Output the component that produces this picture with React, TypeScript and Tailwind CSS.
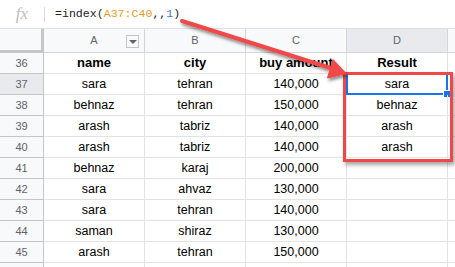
import React from 'react';

const rows: [number, string, string, string, string][] = [
  [37, 'sara', 'tehran', '140,000', 'sara'],
  [38, 'behnaz', 'tehran', '150,000', 'behnaz'],
  [39, 'arash', 'tabriz', '140,000', 'arash'],
  [40, 'arash', 'tabriz', '140,000', 'arash'],
  [41, 'behnaz', 'karaj', '200,000', ''],
  [42, 'sara', 'ahvaz', '130,000', ''],
  [43, 'sara', 'tehran', '140,000', ''],
  [44, 'saman', 'shiraz', '130,000', ''],
  [45, 'arash', 'tehran', '150,000', ''],
  [46, '', '', '', ''],
];

const font = { fontFamily: '"Liberation Sans", Arial, sans-serif' };

const Cell: React.FC<{ children?: React.ReactNode; bold?: boolean; selected?: boolean }> = ({ children, bold, selected }) => (
  <div
    className={`relative w-[101px] shrink-0 h-full flex items-center justify-center border-r border-b border-[#e2e3e3] text-black ${
      bold ? 'font-bold text-[13px]' : 'text-[12.5px]'
    }`}
  >
    {children}
    {selected && (
      <>
        <div className="absolute -left-[1px] -top-[1px] -right-[1px] -bottom-[1px] border-2 border-[#1a73e8]"></div>
        <div className="absolute -right-[4px] -bottom-[4px] w-[6px] h-[6px] bg-[#1a73e8] border border-white box-content"></div>
      </>
    )}
  </div>
);

const App: React.FC = () => {
  return (
    <div className="relative w-[455px] h-[267px] overflow-hidden bg-white" style={font}>
      {/* formula bar */}
      <div className="h-[29px] flex items-center border-b border-[#e0e0e0]">
        <div className="w-[44px] shrink-0 flex items-center justify-center">
          <span className="text-[#bdbdbd] text-[17px] italic" style={{ fontFamily: '"Liberation Serif", serif' }}>
            fx
          </span>
        </div>
        <div className="w-px h-[15px] bg-[#dadce0]"></div>
        <div className="pl-[10px] text-[11.6px] text-[#202124] pb-[1px]" style={{ fontFamily: '"Liberation Mono", "DejaVu Sans Mono", monospace' }}>
          =index(<span className="text-[#e69a28]">A37:C40</span>,,<span className="text-[#3c78d8]">1</span>)
        </div>
      </div>

      {/* column headers */}
      <div className="flex h-[24px] bg-[#f8f9fa] text-[11px] text-[#5f6368]">
        <div className="w-[44px] shrink-0 border-r-[3px] border-b-[3px] border-[#c4c7c5]"></div>
        <div className="relative w-[101px] shrink-0 flex items-center justify-center border-r border-b border-[#d3d5d7]">
          A
          <div className="absolute right-[5px] top-[6px] w-[13px] h-[13px] border border-[#c6c6c6] bg-[#f8f9fa] flex items-center justify-center">
            <div className="w-0 h-0 border-l-[4px] border-r-[4px] border-t-[4px] border-l-transparent border-r-transparent border-t-[#5f6368]"></div>
          </div>
        </div>
        <div className="w-[101px] shrink-0 flex items-center justify-center border-r border-b border-[#d3d5d7]">B</div>
        <div className="w-[101px] shrink-0 flex items-center justify-center border-r border-b border-[#d3d5d7]">C</div>
        <div className="w-[101px] shrink-0 flex items-center justify-center border-r border-b border-[#d3d5d7] bg-[#e8eaed]">D</div>
        <div className="flex-1 border-b border-[#d3d5d7]"></div>
      </div>

      {/* header data row */}
      <div className="flex h-[21px]">
        <div className="w-[44px] shrink-0 flex items-center justify-center bg-[#f8f9fa] border-r border-b border-[#c4c7c5] text-[11px] text-[#5f6368]">
          36
        </div>
        <Cell bold>name</Cell>
        <Cell bold>city</Cell>
        <Cell bold>buy amount</Cell>
        <Cell bold>Result</Cell>
        <div className="flex-1 border-b border-[#e2e3e3]"></div>
      </div>

      {rows.map(([n, a, b, c, d]) => (
        <div key={n} className="flex h-[21px]">
          <div
            className={`w-[44px] shrink-0 flex items-center justify-center border-r border-b border-[#c4c7c5] text-[11px] text-[#5f6368] ${
              n === 37 ? 'bg-[#e8eaed]' : 'bg-[#f8f9fa]'
            }`}
          >
            {n < 46 ? n : ''}
          </div>
          <Cell>{a}</Cell>
          <Cell>{b}</Cell>
          <Cell>{c}</Cell>
          <Cell selected={n === 37}>{d}</Cell>
          <div className="flex-1 border-b border-[#e2e3e3]"></div>
        </div>
      ))}

      {/* annotation box */}
      <div className="absolute left-[343px] top-[72px] w-[110px] h-[90px] border-[3.5px] border-[#f04848] shadow-[2px_3px_4px_rgba(0,0,0,0.35)]"></div>

      {/* annotation arrow */}
      <svg className="absolute left-0 top-0" width="455" height="267" viewBox="0 0 455 267">
        <defs>
          <filter id="sh" x="-10%" y="-30%" width="130%" height="170%">
            <feDropShadow dx="1.5" dy="2.5" stdDeviation="1.5" floodColor="#000" floodOpacity="0.45" />
          </filter>
        </defs>
        <g filter="url(#sh)" fill="#f04848" stroke="#f04848">
          <line x1="182" y1="21" x2="332" y2="68.5" strokeWidth="4" strokeLinecap="round" />
          <polygon points="346,73.5 327.5,78 333,59.5" strokeWidth="1" strokeLinejoin="round" />
        </g>
      </svg>
    </div>
  );
};

export default App;
